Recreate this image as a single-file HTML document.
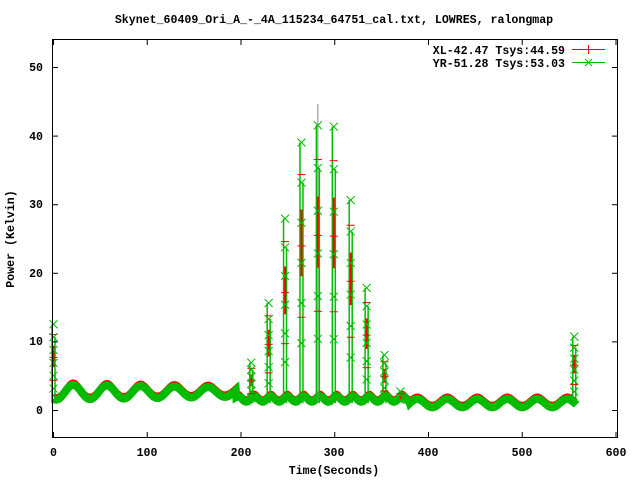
<!DOCTYPE html>
<html><head><meta charset="utf-8"><style>
html,body{margin:0;padding:0;background:#fff;width:640px;height:480px;overflow:hidden}
svg text{font-family:"Liberation Mono",monospace;font-weight:bold;font-size:11.6px;fill:#000}
</style></head><body>
<svg id="s" width="640" height="480" viewBox="0 0 640 480" xmlns="http://www.w3.org/2000/svg">
<rect width="640" height="480" fill="#fff"/>
<text x="334" y="23" text-anchor="middle">Skynet_60409_Ori_A_-_4A_115234_64751_cal.txt, LOWRES, ralongmap</text>
<text x="43" y="71" text-anchor="end">50</text>
<text x="43" y="140" text-anchor="end">40</text>
<text x="43" y="208" text-anchor="end">30</text>
<text x="43" y="277" text-anchor="end">20</text>
<text x="43" y="345" text-anchor="end">10</text>
<text x="43" y="414" text-anchor="end">0</text>
<text x="53.5" y="456" text-anchor="middle">0</text>
<text x="147" y="456" text-anchor="middle">100</text>
<text x="241" y="456" text-anchor="middle">200</text>
<text x="334" y="456" text-anchor="middle">300</text>
<text x="428" y="456" text-anchor="middle">400</text>
<text x="522" y="456" text-anchor="middle">500</text>
<text x="616" y="456" text-anchor="middle">600</text>
<text x="334" y="474" text-anchor="middle">Time(Seconds)</text>
<text x="14" y="239" text-anchor="middle" transform="rotate(-90 14 239)">Power (Kelvin)</text>
<text x="565" y="54" text-anchor="end">XL-42.47 Tsys:44.59</text>
<text x="565" y="67" text-anchor="end">YR-51.28 Tsys:53.03</text>
<line x1="572" y1="49.5" x2="605" y2="49.5" stroke="#f00" stroke-width="1"/>
<line x1="588.5" y1="45" x2="588.5" y2="54" stroke="#f00" stroke-width="1"/>
<line x1="572" y1="62.5" x2="605" y2="62.5" stroke="#0b0" stroke-width="1"/>
<path d="M585 59l7 7M592 59l-7 7" stroke="#0b0" stroke-width="1"/>
<g id="d"></g>
<rect x="52.5" y="39.5" width="565" height="398" fill="none" stroke="#000" stroke-width="1"/>
<g id="t" stroke="#000" stroke-width="1"></g>
</svg>
<script>
var X=function(t){return 53.5+t*0.9375},Y=function(v){return 410-v*6.86};
var d=document.getElementById('d'),h='';
function base(t){if(t<195)return 2.6+1.1*Math.sin((t-12)/36*2*Math.PI)*(1-t/500);
 if(t<380)return 1.6+0.4*Math.sin((t-210)/17.5*2*Math.PI);
 return 1.0+0.6*Math.sin((t-380)/32*2*Math.PI);}
var g='',r='';
for(var t=0;t<=558;t+=0.5){var v=base(t);g+=(t?'L':'M')+X(t).toFixed(1)+' '+Y(v).toFixed(1);r+=(t?'L':'M')+X(t).toFixed(1)+' '+(Y(v)-4).toFixed(1);}
h+='<path d="'+r+'" stroke="#f00" stroke-width="3" fill="none"/>';
h+='<path d="'+g+'" stroke="#0b0" stroke-width="8" fill="none"/>';
var sp=[[0,12.5],[211,6.9],[229.5,15.6],[247,27.9],[264.5,39],[282,41.5],[299,41.3],[317,30.6],[334,17.8],[353,8],[555.5,10.7],[370,2.7]];
sp.forEach(function(s){var x=X(s[0]);
 if(s[0]==282)h+='<line x1="'+x+'" y1="'+Y(44.6)+'" x2="'+x+'" y2="'+Y(1)+'" stroke="#888" stroke-width="1"/>';
 h+='<line x1="'+(x-1.5)+'" y1="'+Y(s[1])+'" x2="'+(x-1.5)+'" y2="'+Y(1)+'" stroke="#0b0" stroke-width="1.5"/>';
 h+='<line x1="'+(x+1.5)+'" y1="'+Y(s[1]*0.85)+'" x2="'+(x+1.5)+'" y2="'+Y(1)+'" stroke="#0b0" stroke-width="1.5"/>';
 h+='<line x1="'+x+'" y1="'+Y(s[1]*0.75)+'" x2="'+x+'" y2="'+Y(s[1]*0.5)+'" stroke="#f00" stroke-width="2"/>';
 var n=s[1]>5?6:2;for(var i=0;i<n;i++){var v=s[1]*(1-i/n*0.9),y=Y(v);
  h+='<path d="M'+(x-4)+' '+(y-4)+'l8 8M'+(x+4)+' '+(y-4)+'l-8 8" stroke="#0b0" stroke-width="1"/>';
  if(i%2==0){var yr=Y(s[1]*(0.88-i/n*0.8));h+='<line x1="'+(x-4)+'" y1="'+yr+'" x2="'+(x+4)+'" y2="'+yr+'" stroke="#f00" stroke-width="1"/>';}}
});
d.innerHTML=h;
var tk='';
[0,100,200,300,400,500,600].forEach(function(t){var x=X(t);tk+='<line x1="'+x+'" y1="438" x2="'+x+'" y2="432"/><line x1="'+x+'" y1="39" x2="'+x+'" y2="45"/>';});
[0,10,20,30,40,50].forEach(function(v){var y=Y(v)+0.5;tk+='<line x1="52" y1="'+y+'" x2="58" y2="'+y+'"/><line x1="618" y1="'+y+'" x2="612" y2="'+y+'"/>';});
document.getElementById('t').innerHTML=tk;
</script>
</body></html>
